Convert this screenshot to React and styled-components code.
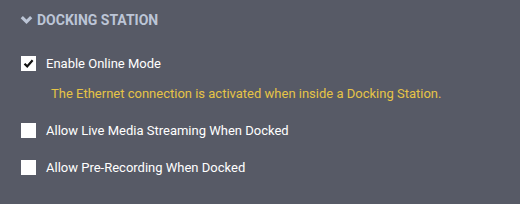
import React, { useState } from "react";
import styled, { createGlobalStyle } from "styled-components";

const GlobalStyle = createGlobalStyle`
    html, body {
        margin: 0;
        padding: 0;
        background: #575a66;
    }
`

const options = [
    {
        id: "online",
        label: "Enable Online Mode",
        checked: true,
        hint: "The Ethernet connection is activated when inside a Docking Station.",
    },
    { id: "streaming", label: "Allow Live Media Streaming When Docked", checked: false },
    { id: "prerecord", label: "Allow Pre-Recording When Docked", checked: false },
]

function Checkbox({ checked, onToggle }) {
    return (
        <Box onClick={onToggle}>
            {checked && (
                <svg width="11" height="11" viewBox="0 0 11 11">
                    <path d="M1.5 5.8 L4.2 8.4 L9.6 2.2" fill="none" stroke="#111" strokeWidth="2.2" />
                </svg>
            )}
        </Box>
    )
}

export default function App() {
    const [state, setState] = useState(
        Object.fromEntries(options.map((o) => [o.id, o.checked]))
    )

    return (
        <Panel>
            <GlobalStyle />
            <Header>
                <svg width="13" height="10" viewBox="0 0 13 10">
                    <path d="M1.8 2.2 L6.5 6.8 L11.2 2.2" fill="none" stroke="#bcc5d6" strokeWidth="3.2" />
                </svg>
                <Title>Docking Station</Title>
            </Header>
            <List>
                {options.map((o) => (
                    <Item key={o.id}>
                        <Option>
                            <Checkbox
                                checked={state[o.id]}
                                onToggle={() => setState({ ...state, [o.id]: !state[o.id] })}
                            />
                            <Label>{o.label}</Label>
                        </Option>
                        {o.hint && <Hint>{o.hint}</Hint>}
                    </Item>
                ))}
            </List>
        </Panel>
    )
}

const Panel = styled.section`
    width: 520px;
    height: 204px;
    background: #575a66;
    border-radius: 0 0 3px 3px;
    font-family: Roboto, "Liberation Sans", sans-serif;
    overflow: hidden;
`

const Header = styled.div`
    display: flex;
    align-items: center;
    gap: 4px;
    height: 40px;
    padding-left: 20px;
`

const Title = styled.h3`
    margin: 0;
    font-size: 14px;
    font-weight: bold;
    text-transform: uppercase;
    color: #bcc5d6;
    line-height: 16px;
`

const List = styled.div`
    display: flex;
    flex-direction: column;
    gap: 22px;
    padding: 16px 21px;
`

const Item = styled.div`
    display: flex;
    flex-direction: column;
`

const Option = styled.label`
    display: flex;
    align-items: center;
    gap: 10px;
    cursor: pointer;
`

const Box = styled.span`
    display: flex;
    align-items: center;
    justify-content: center;
    width: 15px;
    height: 15px;
    background: #ffffff;
    flex-shrink: 0;
`

const Label = styled.span`
    font-size: 13px;
    line-height: 15px;
    color: #ffffff;
`

const Hint = styled.p`
    margin: 15px 0 0 30px;
    font-size: 13px;
    line-height: 15px;
    color: #e6c446;
`
